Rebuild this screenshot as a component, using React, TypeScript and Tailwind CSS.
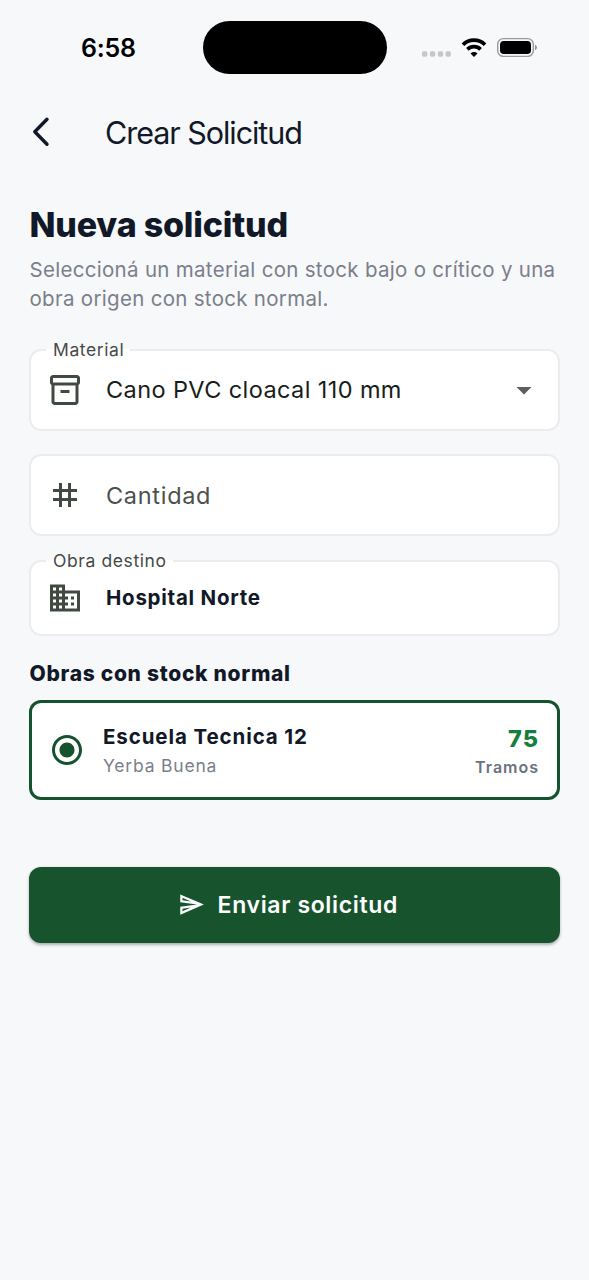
import type { ReactNode } from "react";
import {
  MdArrowDropDown,
  MdBusiness,
  MdOutlineInventory2,
  MdOutlineSend,
  MdRadioButtonChecked,
  MdTag,
} from "react-icons/md";

const StatusBar = () => (
  <div className="flex h-[88px] items-start">
    <div className="mt-[32px] w-[202.5px] pl-[81px] text-[25px] leading-[32px] font-semibold tracking-[-0.2px] text-black">
      6:58
    </div>
    {/* Dynamic island */}
    <div className="mt-[20.5px] h-[53.5px] w-[184px] rounded-full bg-black" />
    <div className="mt-[36px] flex h-[24px] items-center pl-[35.5px]">
      <svg width="30" height="24" viewBox="0 0 30 24" fill="#c6c7c9">
        <rect x="0" y="15.3" width="5.4" height="5.4" rx="1.6" />
        <rect x="7.9" y="15.3" width="5.4" height="5.4" rx="1.6" />
        <rect x="15.8" y="15.3" width="5.4" height="5.4" rx="1.6" />
        <rect x="23.5" y="15.3" width="5.4" height="5.4" rx="1.6" />
      </svg>
      {/* Wifi */}
      <svg className="ml-[9px]" width="26" height="24" viewBox="0 0 26 24" fill="none" stroke="#000" strokeWidth="3.7">
        <path d="M2 8.7a15.6 15.6 0 0 1 22 0" />
        <path d="M6.4 13.4a9.4 9.4 0 0 1 13.2 0" />
        <path d="M13 21.1l-3.5-3.6a5 5 0 0 1 7 0z" fill="#000" stroke="none" />
      </svg>
      {/* Battery */}
      <svg className="ml-[10px]" width="41" height="24" viewBox="0 0 41 24">
        <rect x="0.7" y="2.6" width="35.6" height="17.8" rx="5.6" fill="none" stroke="#999a9c" strokeWidth="1.4" />
        <rect x="3" y="5" width="31" height="13" rx="3.8" fill="#000" />
        <path d="M38 8.8c2.6 1 2.6 4.4 0 5.4z" fill="#8f9092" />
      </svg>
    </div>
  </div>
);

const Header = () => (
  <header className="flex h-[88px] items-center pl-[31px]">
    <svg width="20" height="32" viewBox="0 0 20 32" fill="none" stroke="#111827" strokeWidth="3.4" strokeLinecap="round" strokeLinejoin="round">
      <path d="M16 3.2L3.8 15.8L16 28.2" />
    </svg>
    <h1 className="mt-[2px] ml-[54px] text-[30.5px] leading-[40px] tracking-[-1.05px] text-[#111827]">
      Crear Solicitud
    </h1>
  </header>
);

type FieldProps = {
  label?: string;
  icon: ReactNode;
  className: string;
  rowClassName: string;
  children: ReactNode;
};

const Field = ({ label, icon, className, rowClassName, children }: FieldProps) => (
  <fieldset className={`min-w-0 rounded-xl border-2 border-[#ebecef] bg-white ${className}`}>
    {label && (
      <legend className="ml-[15px] h-[20px] pr-[6px] pl-[7px] text-[17.5px] leading-[20px] tracking-[0.6px] text-[#454a47]">
        {label}
      </legend>
    )}
    <div className={`flex items-center pl-[15.5px] ${rowClassName}`}>
      {icon}
      <div className="ml-[23.5px] flex flex-1 items-center">{children}</div>
    </div>
  </fieldset>
);

export default function App() {
  return (
    <div className="h-[1280px] w-[589px] bg-[#f7f8fa] font-['Inter',sans-serif]">
      <StatusBar />
      <Header />
      <main className="flex flex-col px-[29px]">
        <h2 className="mt-[27px] pl-[0.5px] text-[34px] leading-[44px] font-extrabold tracking-[-0.2px] text-[#111827]">
          Nueva solicitud
        </h2>
        <p className="mt-[8px] pl-[0.5px] text-[20.5px] leading-[29.3px] tracking-[0.3px] whitespace-nowrap text-[#7b7f8a]">
          Seleccioná un material con stock bajo o crítico y una
          <br />
          obra origen con stock normal.
        </p>

        <Field
          label="Material"
          className="mt-[26px] h-[91px]"
          rowClassName="h-[60px]"
          icon={<MdOutlineInventory2 className="size-[36px] text-[#424842]" />}
        >
          <span className="mt-px flex-1 text-[23.5px] tracking-[0.4px] text-[#191c1a]">Cano PVC cloacal 110 mm</span>
          <MdArrowDropDown className="mr-[16px] size-[36px] text-[#5b605c]" />
        </Field>

        <Field
          className="mt-[23px] h-[82px]"
          rowClassName="h-[78px]"
          icon={<MdTag className="size-[36px] text-[#424842]" />}
        >
          <span className="mt-[2px] text-[23.5px] tracking-[0.7px] text-[#4c514d]">Cantidad</span>
        </Field>

        <Field
          label="Obra destino"
          className="mt-[15px] h-[85px]"
          rowClassName="h-[54px]"
          icon={<MdBusiness className="size-[36px] text-[#424842]" />}
        >
          <span className="mt-[2px] text-[20.5px] font-bold tracking-[0.75px] text-[#111827]">Hospital Norte</span>
        </Field>

        <h3 className="mt-[24px] pl-[0.5px] text-[21px] leading-[28px] font-extrabold tracking-[0.7px] text-[#111827]">
          Obras con stock normal
        </h3>

        <div className="mt-[12px] flex h-[100px] items-center rounded-xl border-[3px] border-[#14532d] bg-white px-[17px]">
          <MdRadioButtonChecked className="size-[36px] text-[#14532d]" />
          <div className="mt-[2px] ml-[18px] flex-1">
            <div className="text-[20.5px] leading-[30px] font-bold tracking-[0.9px] text-[#111827]">
              Escuela Tecnica 12
            </div>
            <div className="text-[17.5px] leading-[28px] tracking-[0.8px] text-[#7b7f8a]">Yerba Buena</div>
          </div>
          <div className="mt-[3px] mr-px text-right">
            <div className="text-[23.5px] leading-[31px] font-extrabold tracking-[1px] text-[#15803d]">75</div>
            <div className="text-[16px] leading-[26px] font-semibold tracking-[1px] text-[#6b7280]">Tramos</div>
          </div>
        </div>

        <button className="mt-[67px] flex h-[76px] items-center justify-center rounded-xl bg-[#17542e] pr-[13px] text-white shadow-[0_1.5px_3px_rgba(0,0,0,0.3)]">
          <MdOutlineSend className="size-[27px]" />
          <span className="mt-[2px] ml-[12.5px] text-[23px] font-semibold tracking-[0.65px]">Enviar solicitud</span>
        </button>
      </main>
    </div>
  );
}
